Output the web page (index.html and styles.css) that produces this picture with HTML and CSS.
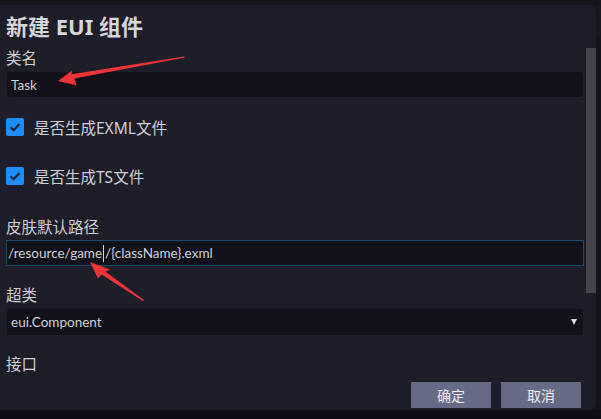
FILE: index.html
```html
<!DOCTYPE html>
<html lang="zh">
<head>
<meta charset="utf-8">
<link rel="stylesheet" href="styles.css">
</head>
<body>
<div class="topbar"></div>
<div class="row">
  <div class="panel">
    <div class="title">新建 EUI 组件</div>
    <div class="label l1">类名</div>
    <div class="input in1">Task</div>
    <div class="check c1"><span class="box"><svg width="18" height="18" viewBox="0 0 18 18"><path d="M4.5 9.2 L7.6 12.2 L13.5 6" fill="none" stroke="#1d2030" stroke-width="2.2"/></svg></span><span>是否生成EXML文件</span></div>
    <div class="check c2"><span class="box"><svg width="18" height="18" viewBox="0 0 18 18"><path d="M4.5 9.2 L7.6 12.2 L13.5 6" fill="none" stroke="#1d2030" stroke-width="2.2"/></svg></span><span>是否生成TS文件</span></div>
    <div class="label l2">皮肤默认路径</div>
    <div class="input in2"><span>/resource/game</span><span class="caret"></span><span>/{className}.exml</span></div>
    <div class="label l3">超类</div>
    <div class="input sel"><span>eui.Component</span><span class="tri"></span></div>
    <div class="label l3">接口</div>
    <div class="buttons">
      <button class="btn">确定</button>
      <button class="btn">取消</button>
    </div>
    <div class="scroll"></div>
  </div>
  <div class="strip"></div>
</div>
<div class="bottombar"></div>
<svg class="arrows" width="601" height="419" viewBox="0 0 601 419">
  <path d="M58 81 L72 70.5 L71.5 74.3 L184 56.5 L185 57.5 L74.5 78.5 L76.5 85.5 Z" fill="#ee3434"/>
  <path d="M90 262 L110 269.5 L105.5 271.8 L144 300 L143 301 L101.5 274.4 L98 278.5 Z" fill="#ee3434"/>
</svg>
</body>
</html>
```

FILE: styles.css
```css
* { box-sizing: border-box; }
html, body { margin: 0; padding: 0; }
body {
  width: 601px;
  height: 419px;
  overflow: hidden;
  background: #16151e;
  font-family: "Noto Sans", "Noto Sans CJK SC", sans-serif;
  color: #cfcfd4;
  position: relative;
}
.topbar { height: 5px; background: #17161f; }
.row { display: flex; height: 405px; }
.panel {
  position: relative;
  width: 596px;
  height: 405px;
  background: #1e1d2a;
  border-radius: 0 7px 7px 0;
  padding: 0 15px 0 6px;
  display: flex;
  flex-direction: column;
}
.strip {
  flex: 1;
  background: #15141c;
  border-top: 32px solid #18171f;
}
.bottombar { height: 9px; background: #0e0d15; }
.title {
  margin-top: 7px;
  height: 28px;
  line-height: 28px;
  font-size: 22px;
  font-weight: bold;
  color: #d6d6da;
}
.label {
  height: 20px;
  line-height: 20px;
  font-size: 15.5px;
  color: #cfcfd4;
}
.l1 { margin-top: 8px; }
.l2 { margin-top: 32px; }
.l3 { margin-top: 19px; }
.input {
  height: 25px;
  width: 576px;
  margin-left: 1px;
  background: #12111b;
  border-radius: 3px;
  font-family: "Lato", "Noto Sans", sans-serif;
  font-size: 13.5px;
  color: #d0d0d6;
  display: flex;
  align-items: center;
  padding-left: 4px;
}
.in1 { margin-top: 4px; }
.in2 {
  margin-top: 3px;
  margin-left: 0;
  width: 578px;
  height: 26px;
  border: 1px solid #1b4a6e;
  border-radius: 0;
  padding-left: 1px;
}
.caret {
  display: inline-block;
  width: 1px;
  height: 17px;
  background: #d8d8dc;
  margin: 0 1px;
}
.sel {
  margin-top: 4px;
  height: 26px;
  justify-content: space-between;
  padding-right: 6px;
}
.tri {
  width: 0;
  height: 0;
  border-left: 3.5px solid transparent;
  border-right: 3.5px solid transparent;
  border-top: 6px solid #d8d8dc;
}
.check {
  height: 18px;
  display: flex;
  align-items: center;
  font-size: 15.5px;
  color: #cfcfd4;
}
.c1 { margin-top: 21px; }
.c2 { margin-top: 31px; }
.box {
  width: 18px;
  height: 18px;
  background: #1e8ffa;
  border-radius: 2px;
  margin-right: 10px;
  display: flex;
}
.buttons {
  margin-top: 8px;
  display: flex;
  justify-content: flex-end;
  gap: 10px;
}
.btn {
  width: 80px;
  height: 26px;
  background: #676a85;
  border: none;
  border-radius: 0;
  color: #ececf2;
  font-family: "Noto Sans CJK SC", sans-serif;
  font-size: 14px;
  padding: 0;
}
.scroll {
  position: absolute;
  right: 0;
  top: 43px;
  width: 10px;
  height: 245px;
  background: #45444e;
}
.arrows {
  position: absolute;
  left: 0;
  top: 0;
  pointer-events: none;
}
```
